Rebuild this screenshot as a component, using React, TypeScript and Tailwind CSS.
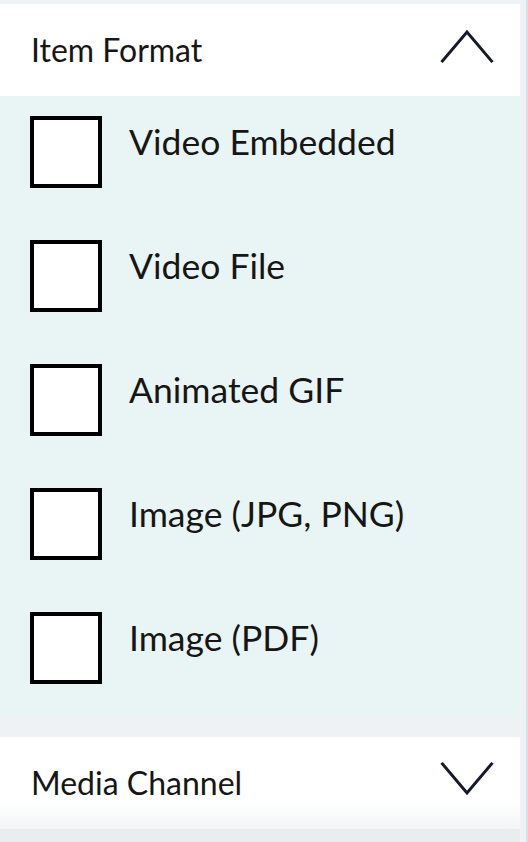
const items = ["Video Embedded", "Video File", "Animated GIF", "Image (JPG, PNG)", "Image (PDF)"];

function Chevron({ up }: { up: boolean }) {
  return (
    <svg width="56" height="36" viewBox="0 0 56 36" fill="none" className="mt-[24px]">
      <path
        d={up ? "M3.5 33 L28 4 L52.5 33" : "M3.5 3 L28 32 L52.5 3"}
        stroke="#141a2a"
        strokeWidth="3"
        strokeLinecap="square"
      />
    </svg>
  );
}

function Header({ title, open }: { title: string; open: boolean }) {
  return (
    <div
      className={
        "h-[92px] flex items-start justify-between pl-[31px] pr-[25px] " +
        (open ? "bg-white" : "bg-gradient-to-b from-white from-70% to-[#f3f5f6]")
      }
    >
      <span className="text-[32px] leading-none mt-[30px]">{title}</span>
      <Chevron up={open} />
    </div>
  );
}

export default function App() {
  return (
    <div
      className="flex w-[528px] h-[842px] overflow-hidden bg-[#eef2f4] text-[#161616]"
      style={{ fontFamily: "Lato, 'Open Sans', sans-serif" }}
    >
      <div className="w-[520px] pt-1 flex flex-col">
        <Header title="Item Format" open />

        {/* Options */}
        <div className="bg-[#e9f5f5] pt-5 pb-8 pl-[30px] flex flex-col gap-[52px]">
          {items.map((label) => (
            <label key={label} className="flex items-start gap-[27px]">
              <span className="w-[72px] h-[72px] border-4 border-black bg-white shrink-0" />
              <span className="text-[35.5px] leading-none mt-[8px]">{label}</span>
            </label>
          ))}
        </div>
        <div className="h-[21px] bg-[#eef2f5]" />

        <Header title="Media Channel" open={false} />
        <div className="flex-1 bg-[#e9edf0]" />
      </div>
      <div className="w-[6px] bg-[#eef2f4]" />
      <div className="w-[2px] bg-[#d6e2e7]" />
    </div>
  );
}
